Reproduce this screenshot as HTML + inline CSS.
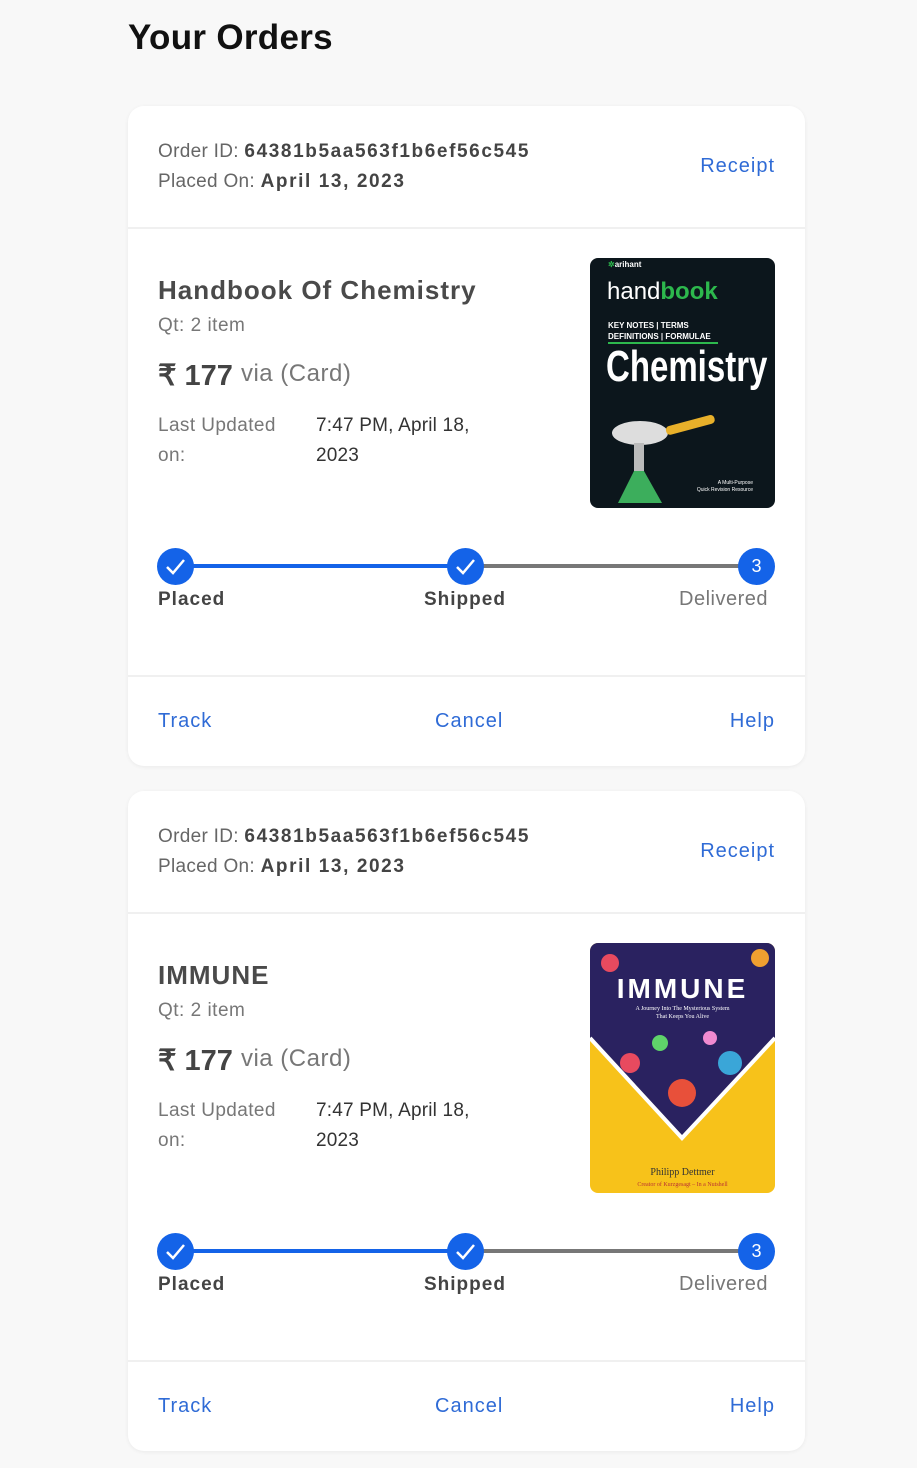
<!DOCTYPE html>
<html><head><meta charset="utf-8">
<style>
*{margin:0;padding:0;box-sizing:border-box}
body{width:917px;height:1468px;background:#f8f8f8;font-family:"Liberation Sans",sans-serif;color:#555;position:relative;overflow:hidden}
h1{position:absolute;left:128px;top:18px;font-size:35px;font-weight:bold;color:#111;letter-spacing:0.3px}
.card{position:absolute;left:128px;width:677px;height:660px;background:#fff;border-radius:16px;box-shadow:0 1px 4px rgba(0,0,0,0.06)}
.a{position:absolute;white-space:nowrap}
.hdr{font-size:19px;color:#666;letter-spacing:0.3px}
.hdr b{color:#444;letter-spacing:1.6px}
.blue{color:#2f6bd6;font-size:20px;letter-spacing:1px}
.line{position:absolute;left:0;width:677px;height:2px;background:#f0f0f0}
.title{font-size:26px;font-weight:bold;color:#4a4a4a;letter-spacing:1px}
.sm{font-size:19px;color:#777;letter-spacing:0.5px}
.price{font-size:29px;font-weight:bold;color:#444}
.price span{font-weight:normal;font-size:24px;color:#777;vertical-align:4px;letter-spacing:0.5px}
.upd{font-size:19px;color:#777;line-height:30px;letter-spacing:0.4px}
.upd2{font-size:19px;color:#333;line-height:30px;letter-spacing:0.2px}
.dot{position:absolute;width:37px;height:37px;border-radius:50%;background:#1463e8;color:#fff;text-align:center;line-height:37px;font-size:18px}
.bar{position:absolute;height:4px}
.lbl{font-size:19px;font-weight:bold;color:#444;letter-spacing:1px}
.cover{position:absolute;left:462px;top:152px;width:185px;height:250px;border-radius:8px;overflow:hidden}
</style></head><body>
<h1>Your Orders</h1>

<!-- card 1 -->
<div class="card" style="top:106px">
 <div class="a hdr" style="left:30px;top:35px">Order ID: <b>64381b5aa563f1b6ef56c545</b></div>
 <div class="a hdr" style="left:30px;top:65px">Placed On: <b>April 13, 2023</b></div>
 <div class="a blue" style="right:30px;top:49px">Receipt</div>
 <div class="line" style="top:121px"></div>
 <div class="a title" style="left:30px;top:169px">Handbook Of Chemistry</div>
 <div class="a sm" style="left:30px;top:209px">Qt: 2 item</div>
 <div class="a price" style="left:30px;top:252px">₹ 177 <span>via (Card)</span></div>
 <div class="a upd" style="left:30px;top:305px">Last Updated<br>on:</div>
 <div class="a upd2" style="left:188px;top:305px">7:47 PM, April 18,<br>2023</div>
 <div class="cover" style="background:#0c161c">
  <div class="a" style="left:18px;top:2px;color:#fff;font-size:8px;font-weight:bold"><span style="color:#2db84d">✲</span>arihant</div>
  <div class="a" style="left:17px;top:20px;color:#fff;font-size:24px">hand<b style="color:#2db84d">book</b></div>
  <div class="a" style="left:18px;top:62px;color:#fff;font-size:8px;font-weight:bold;line-height:11px">KEY NOTES | TERMS<br>DEFINITIONS | FORMULAE</div>
  <div class="a" style="left:18px;top:84px;width:110px;height:2px;background:#2db84d"></div>
  <div class="a" style="left:16px;top:84px;color:#fff;font-size:44px;font-weight:bold;transform:scaleX(0.75);transform-origin:left">Chemistry</div>
  <svg class="a" style="left:20px;top:155px" width="120" height="90"><ellipse cx="30" cy="20" rx="28" ry="12" fill="#ddd"/><rect x="55" y="14" width="50" height="9" rx="4" fill="#e8b02a" transform="rotate(-15 55 14)"/><rect x="24" y="30" width="10" height="30" fill="#bbb"/><path d="M24 58 L8 90 L52 90 L34 58Z" fill="#3cae5c"/></svg>
  <div class="a" style="right:22px;top:222px;color:#fff;font-size:5px;line-height:7px;text-align:right">A Multi-Purpose<br>Quick Revision Resource</div>
 </div>
 <div class="bar" style="left:48px;top:458px;width:290px;background:#1463e8"></div>
 <div class="bar" style="left:338px;top:458px;width:290px;background:#777"></div>
 <div class="dot" style="left:29px;top:442px"><svg width="37" height="37"><path d="M10 19 L16 25 L27 12" stroke="#fff" stroke-width="2.5" fill="none"/></svg></div>
 <div class="dot" style="left:319px;top:442px"><svg width="37" height="37"><path d="M10 19 L16 25 L27 12" stroke="#fff" stroke-width="2.5" fill="none"/></svg></div>
 <div class="dot" style="left:610px;top:442px">3</div>
 <div class="a lbl" style="left:30px;top:483px">Placed</div>
 <div class="a lbl" style="left:296px;top:483px">Shipped</div>
 <div class="a sm" style="right:37px;top:482px;font-size:20px">Delivered</div>
 <div class="line" style="top:569px"></div>
 <div class="a blue" style="left:30px;top:604px">Track</div>
 <div class="a blue" style="left:307px;top:604px">Cancel</div>
 <div class="a blue" style="right:30px;top:604px">Help</div>
</div>

<!-- card 2 -->
<div class="card" style="top:791px">
 <div class="a hdr" style="left:30px;top:35px">Order ID: <b>64381b5aa563f1b6ef56c545</b></div>
 <div class="a hdr" style="left:30px;top:65px">Placed On: <b>April 13, 2023</b></div>
 <div class="a blue" style="right:30px;top:49px">Receipt</div>
 <div class="line" style="top:121px"></div>
 <div class="a title" style="left:30px;top:169px">IMMUNE</div>
 <div class="a sm" style="left:30px;top:209px">Qt: 2 item</div>
 <div class="a price" style="left:30px;top:252px">₹ 177 <span>via (Card)</span></div>
 <div class="a upd" style="left:30px;top:305px">Last Updated<br>on:</div>
 <div class="a upd2" style="left:188px;top:305px">7:47 PM, April 18,<br>2023</div>
 <div class="cover" style="background:#f7c21a">
  <svg class="a" style="left:0;top:0" width="185" height="250"><path d="M0 0 H185 V95 L92 195 L0 95Z" fill="#2a2260"/><circle cx="40" cy="120" r="10" fill="#e84a5f"/><circle cx="140" cy="120" r="12" fill="#3aa6d8"/><circle cx="92" cy="150" r="14" fill="#e8503a"/><circle cx="70" cy="100" r="8" fill="#5fd36a"/><circle cx="120" cy="95" r="7" fill="#f08ad0"/><circle cx="20" cy="20" r="9" fill="#e84a5f"/><circle cx="170" cy="15" r="9" fill="#f0a030"/><path d="M0 95 L92 195 L185 95" stroke="#fff" stroke-width="4" fill="none"/></svg>
  <div class="a" style="left:0;width:185px;text-align:center;top:30px;color:#fff;font-size:28px;font-weight:bold;letter-spacing:3px">IMMUNE</div>
  <div class="a" style="left:0;width:185px;text-align:center;top:62px;color:#fff;font-size:6px;font-family:'Liberation Serif',serif;line-height:8px">A Journey Into The Mysterious System<br>That Keeps You Alive</div>
  <div class="a" style="left:0;width:185px;text-align:center;top:224px;color:#333;font-size:10px;font-family:'Liberation Serif',serif;line-height:11px">Philipp Dettmer<br><span style="font-size:6px;color:#b33">Creator of Kurzgesagt – In a Nutshell</span></div>
 </div>
 <div class="bar" style="left:48px;top:458px;width:290px;background:#1463e8"></div>
 <div class="bar" style="left:338px;top:458px;width:290px;background:#777"></div>
 <div class="dot" style="left:29px;top:442px"><svg width="37" height="37"><path d="M10 19 L16 25 L27 12" stroke="#fff" stroke-width="2.5" fill="none"/></svg></div>
 <div class="dot" style="left:319px;top:442px"><svg width="37" height="37"><path d="M10 19 L16 25 L27 12" stroke="#fff" stroke-width="2.5" fill="none"/></svg></div>
 <div class="dot" style="left:610px;top:442px">3</div>
 <div class="a lbl" style="left:30px;top:483px">Placed</div>
 <div class="a lbl" style="left:296px;top:483px">Shipped</div>
 <div class="a sm" style="right:37px;top:482px;font-size:20px">Delivered</div>
 <div class="line" style="top:569px"></div>
 <div class="a blue" style="left:30px;top:604px">Track</div>
 <div class="a blue" style="left:307px;top:604px">Cancel</div>
 <div class="a blue" style="right:30px;top:604px">Help</div>
</div>
</body></html>
